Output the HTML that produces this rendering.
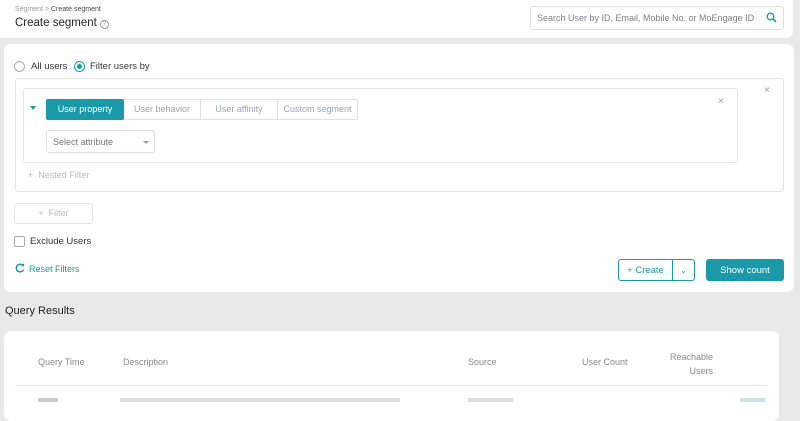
<!DOCTYPE html>
<html><head><meta charset="utf-8"><style>
*{box-sizing:border-box;margin:0;padding:0}
body{width:800px;height:403px;overflow:hidden;background:#e9e9ea;font-family:"Liberation Sans",sans-serif;color:#333;position:relative}
.card{position:absolute;background:#fff;border-radius:7px}
.a{position:absolute}
</style></head><body>
<div class="card" style="left:-8px;top:-8px;width:801px;height:46px"></div>
<div class="a" style="left:15px;top:6px;font-size:7px;color:#999">Segment &gt; <span style="color:#444">Create segment</span></div>
<div class="a" style="left:15px;top:17px;font-size:11.5px;color:#222">Create segment <span style="display:inline-block;width:9px;height:9px;border:1px solid #999;border-radius:50%;font-size:6px;text-align:center;line-height:7px;color:#888;vertical-align:1px">?</span></div>
<div class="a" style="left:530px;top:6px;width:254px;height:24px;border:1px solid #dde0e6;border-radius:3px;font-size:9px;color:#7a808a;padding:6px 0 0 6px">Search User by ID, Email, Mobile No. or MoEngage ID
<svg class="a" style="right:6px;top:5px" width="11" height="11" viewBox="0 0 11 11"><circle cx="4.5" cy="4.5" r="3.3" stroke="#1a9aa8" stroke-width="1.4" fill="none"/><path d="M7 7L10 10" stroke="#1a9aa8" stroke-width="1.6"/></svg></div>

<div class="card" style="left:4px;top:44px;width:790px;height:248px"></div>
<div class="a" style="left:14px;top:61px;width:11px;height:11px;border:1px solid #aaa;border-radius:50%"></div>
<div class="a" style="left:31px;top:61px;font-size:9.5px">All users</div>
<div class="a" style="left:74px;top:61px;width:11px;height:11px;border:1px solid #1a9aa8;border-radius:50%"><div style="width:5px;height:5px;background:#1a9aa8;border-radius:50%;margin:2px"></div></div>
<div class="a" style="left:90px;top:61px;font-size:9.5px">Filter users by</div>
<div class="a" style="left:15px;top:78px;width:769px;height:114px;border:1px solid #e3e5ea;border-radius:3px"></div>
<div class="a" style="left:764px;top:85px;font-size:10px;color:#999">×</div>
<div class="a" style="left:23px;top:88px;width:715px;height:75px;border:1px solid #e3e5ea;border-radius:3px"></div>
<div class="a" style="left:718px;top:96px;font-size:10px;color:#999">×</div>
<div class="a" style="left:30px;top:106px;width:0;height:0;border-left:3.5px solid transparent;border-right:3.5px solid transparent;border-top:4px solid #1a9aa8"></div>
<div class="a" style="left:46px;top:99px;width:312px;height:21px;border:1px solid #dde0e6;border-radius:2px;display:flex;font-size:9px;color:#9aa3b0">
<div style="width:78px;background:#1a9aa8;color:#fff;text-align:center;line-height:21px;margin:-1px 0 -1px -1px;border-radius:2px">User property</div>
<div style="width:77px;text-align:center;line-height:19px;border-right:1px solid #dde0e6">User behavior</div>
<div style="width:77px;text-align:center;line-height:19px;border-right:1px solid #dde0e6">User affinity</div>
<div style="width:79px;text-align:center;line-height:19px">Custom segment</div></div>
<div class="a" style="left:46px;top:130px;width:109px;height:23px;border:1px solid #dde0e6;border-radius:3px;font-size:9px;color:#777;padding:6px 0 0 6px">Select attribute<div class="a" style="right:5px;top:10px;border-left:3.5px solid transparent;border-right:3.5px solid transparent;border-top:3.5px solid #999"></div></div>
<div class="a" style="left:28px;top:170px;font-size:9px;color:#bbb">+ &nbsp;Nested Filter</div>
<div class="a" style="left:14px;top:203px;width:79px;height:21px;border:1px solid #e3e5ea;border-radius:3px;font-size:9px;color:#bbb;text-align:center;line-height:19px">+ &nbsp;Filter</div>
<div class="a" style="left:14px;top:236px;width:11px;height:11px;border:1px solid #aaa;border-radius:2px"></div>
<div class="a" style="left:30px;top:236px;font-size:9.5px">Exclude Users</div>
<svg class="a" style="left:15px;top:263px" width="10" height="10" viewBox="0 0 10 10"><path d="M8.3 3A3.8 3.8 0 1 0 8.6 6.5" stroke="#1a9aa8" stroke-width="1.5" fill="none"/><path d="M6 3.3L9 3.3L9 0.3Z" fill="#1a9aa8"/></svg>
<div class="a" style="left:29px;top:264px;font-size:9px;color:#1a9aa8">Reset Filters</div>
<div class="a" style="left:618px;top:259px;width:77px;height:22px;border:1px solid #1a9aa8;border-radius:3px;font-size:9.5px;color:#1a9aa8;display:flex;align-items:center">
<div style="width:54px;height:100%;border-right:1px solid #1a9aa8;display:flex;align-items:center;justify-content:center">+ Create</div>
<div style="flex:1;text-align:center;font-size:8px">⌄</div></div>
<div class="a" style="left:706px;top:259px;width:78px;height:22px;background:#1a9aa8;border-radius:3px;font-size:9.5px;color:#fff;display:flex;align-items:center;justify-content:center">Show count</div>

<div class="a" style="left:5px;top:305px;font-size:11px;color:#222">Query Results</div>
<div class="card" style="left:4px;top:331px;width:775px;height:90px"></div>
<div class="a" style="left:38px;top:357px;font-size:9px;color:#888">Query Time</div>
<div class="a" style="left:123px;top:357px;font-size:9px;color:#888">Description</div>
<div class="a" style="left:468px;top:357px;font-size:9px;color:#888">Source</div>
<div class="a" style="left:582px;top:357px;font-size:9px;color:#888">User Count</div>
<div class="a" style="left:670px;top:350px;font-size:9px;color:#888;text-align:right;line-height:14px">Reachable<br>Users</div>
<div class="a" style="left:15px;top:385px;width:753px;height:1px;background:#e3e5ea"></div>
<div class="a" style="left:38px;top:398px;width:20px;height:4px;background:#ccc"></div>
<div class="a" style="left:120px;top:398px;width:280px;height:4px;background:#ddd"></div>
<div class="a" style="left:468px;top:398px;width:45px;height:4px;background:#ddd"></div>
<div class="a" style="left:740px;top:398px;width:25px;height:4px;background:#c6e3e6"></div>
</body></html>
